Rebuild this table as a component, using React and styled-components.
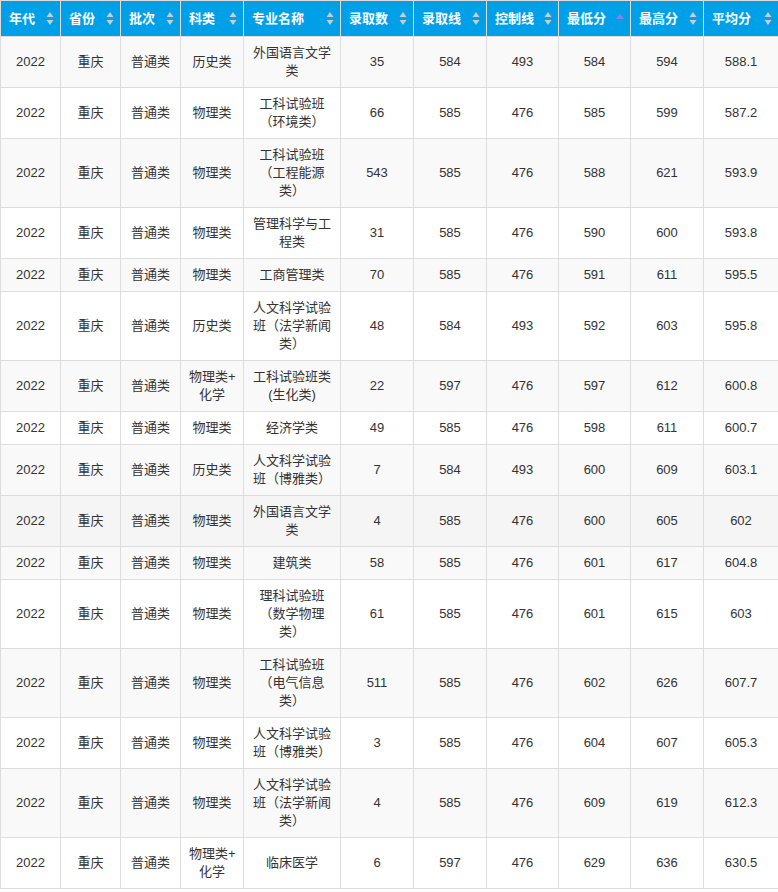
import React from 'react'
import styled, { createGlobalStyle } from 'styled-components'

const GlobalStyle = createGlobalStyle`
    html, body {
        margin: 0;
        padding: 0;
        background: #fff;
    }
    body {
        font-family: "Liberation Sans", Arial, "Noto Sans CJK SC", sans-serif;
        color: #333;
    }
`

const Table = styled.table`
    width: 778px;
    table-layout: fixed;
    border-collapse: collapse;
    border: 1px solid #ddd;
    font-size: 13px;
`

const HeadCell = styled.th`
    height: 36px;
    padding: 0 6px 0 8px;
    box-sizing: border-box;
    background: #00a0e9;
    color: #fff;
    font-weight: bold;
    text-align: left;
    border: 1px solid #ddd;
    border-top: none;
    border-bottom: none;
    white-space: nowrap;
    overflow: hidden;
`

const HeadInner = styled.div`
    display: flex;
    align-items: center;
    justify-content: space-between;
    line-height: 18px;
`

const Row = styled.tr`
    background: ${p => (p.$hover ? '#f5f5f5' : p.$odd ? '#f9f9f9' : '#fff')};
`

const Cell = styled.td`
    padding: 7px 8px;
    line-height: 18px;
    text-align: center;
    vertical-align: middle;
    border: 1px solid #ddd;
    color: #333;
    word-break: break-all;
`

// keeps "物理类+" together on its line
const NoWrap = styled.span`
    white-space: nowrap;
`

function SortIcon({ active }) {
    if (active) {
        return (
            <svg width="8" height="12" viewBox="0 0 8 12">
                <polygon points="4,1 8,6 0,6" fill="#8585df" />
            </svg>
        )
    }
    return (
        <svg width="8" height="13" viewBox="0 0 8 13">
            <polygon points="4,0 7.5,5 0.5,5" fill="#c6cdd3" />
            <polygon points="0.5,8 7.5,8 4,13" fill="#c6cdd3" />
        </svg>
    )
}

const columns = [
    { title: '年代', width: 60 },
    { title: '省份', width: 60 },
    { title: '批次', width: 60 },
    { title: '科类', width: 63 },
    { title: '专业名称', width: 97 },
    { title: '录取数', width: 73 },
    { title: '录取线', width: 73 },
    { title: '控制线', width: 72 },
    { title: '最低分', width: 72, active: true },
    { title: '最高分', width: 73 },
    { title: '平均分', width: 75 },
]

const rows = [
    ['历史类', '外国语言文学类', 35, 584, 493, 584, 594, '588.1'],
    ['物理类', '工科试验班（环境类）', 66, 585, 476, 585, 599, '587.2'],
    ['物理类', '工科试验班（工程能源类）', 543, 585, 476, 588, 621, '593.9'],
    ['物理类', '管理科学与工程类', 31, 585, 476, 590, 600, '593.8'],
    ['物理类', '工商管理类', 70, 585, 476, 591, 611, '595.5'],
    ['历史类', '人文科学试验班（法学新闻类）', 48, 584, 493, 592, 603, '595.8'],
    ['物理类+化学', '工科试验班类(生化类)', 22, 597, 476, 597, 612, '600.8'],
    ['物理类', '经济学类', 49, 585, 476, 598, 611, '600.7'],
    ['历史类', '人文科学试验班（博雅类）', 7, 584, 493, 600, 609, '603.1'],
    ['物理类', '外国语言文学类', 4, 585, 476, 600, 605, '602'],
    ['物理类', '建筑类', 58, 585, 476, 601, 617, '604.8'],
    ['物理类', '理科试验班（数学物理类）', 61, 585, 476, 601, 615, '603'],
    ['物理类', '工科试验班（电气信息类）', 511, 585, 476, 602, 626, '607.7'],
    ['物理类', '人文科学试验班（博雅类）', 3, 585, 476, 604, 607, '605.3'],
    ['物理类', '人文科学试验班（法学新闻类）', 4, 585, 476, 609, 619, '612.3'],
    ['物理类+化学', '临床医学', 6, 597, 476, 629, 636, '630.5'],
]

function renderSubject(v) {
    const idx = v.indexOf('+')
    if (idx < 0) return v
    return (
        <>
            <NoWrap>{v.slice(0, idx + 1)}</NoWrap>
            <wbr />
            {v.slice(idx + 1)}
        </>
    )
}

export default function App() {
    return (
        <>
            <GlobalStyle />
            <Table>
                <colgroup>
                    {columns.map(c => (
                        <col key={c.title} style={{ width: c.width }} />
                    ))}
                </colgroup>
                <thead>
                    <tr>
                        {columns.map(c => (
                            <HeadCell key={c.title}>
                                <HeadInner>
                                    <span>{c.title}</span>
                                    <SortIcon active={c.active} />
                                </HeadInner>
                            </HeadCell>
                        ))}
                    </tr>
                </thead>
                <tbody>
                    {rows.map((r, i) => (
                        <Row key={i} $odd={i % 2 === 0} $hover={i === 9}>
                            <Cell>2022</Cell>
                            <Cell>重庆</Cell>
                            <Cell>普通类</Cell>
                            {r.map((v, j) => (
                                <Cell key={j}>{j === 0 ? renderSubject(v) : v}</Cell>
                            ))}
                        </Row>
                    ))}
                </tbody>
            </Table>
        </>
    )
}
